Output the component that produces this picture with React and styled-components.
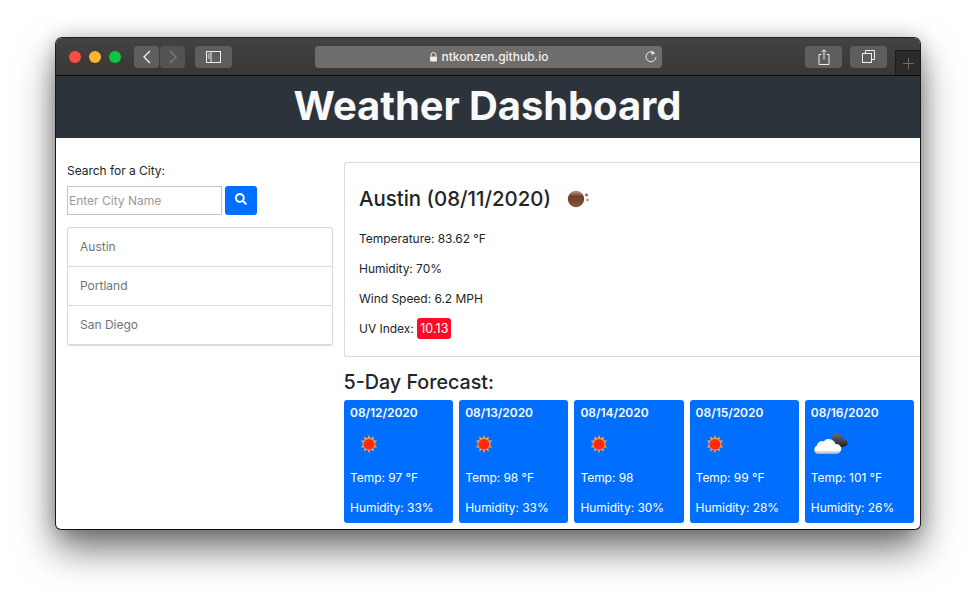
import React from "react";
import styled, { createGlobalStyle } from "styled-components";
import { FaSearch } from "react-icons/fa";

const Global = createGlobalStyle`
  html, body { margin: 0; padding: 0; background: #fff; }
  body { font-family: Inter, "Liberation Sans", sans-serif; }
  * { box-sizing: border-box; }
`;

const Stage = styled.div`
  width: 976px;
  height: 603px;
  padding: 38px 56px 74px;
  overflow: hidden;
  background: #fff;
`;

const Window = styled.div`
  width: 864px;
  height: 491px;
  display: flex;
  flex-direction: column;
  border-radius: 6px 6px 5px 5px;
  overflow: hidden;
  background: #fff;
  box-shadow: 0 0 0 1px rgba(0, 0, 0, 0.85), 0 20px 38px rgba(0, 0, 0, 0.55), 0 2px 20px rgba(0, 0, 0, 0.25);
`;

const TitleBar = styled.div`
  position: relative;
  flex: 0 0 38px;
  display: flex;
  align-items: center;
  padding: 0 0 0 13px;
  background: linear-gradient(#454341, #393735);
  border-bottom: 1px solid #0d0d0d;
`;

const Lights = styled.div`
  display: flex;
  gap: 8px;
  margin-right: 13px;
`;

const Light = styled.span`
  width: 12px;
  height: 12px;
  border-radius: 50%;
  background: ${(p) => p.$color};
`;

const NavGroup = styled.div`
  display: flex;
  gap: 1px;
  margin-right: 10px;
`;

const ToolButton = styled.div`
  width: ${(p) => p.$width}px;
  height: 22px;
  display: flex;
  align-items: center;
  justify-content: center;
  border-radius: 4px;
  background: ${(p) => (p.$dim ? "#555351" : "#605e5c")};
`;

const AddressBar = styled.div`
  position: relative;
  width: 347px;
  height: 22px;
  margin-left: 83px;
  display: flex;
  align-items: center;
  justify-content: center;
  gap: 4px;
  border-radius: 4px;
  background: #6f6d6b;
  color: #f1f1f1;
  font-size: 12px;
  font-weight: 500;
`;

const Reload = styled.span`
  position: absolute;
  right: 4px;
  top: 4px;
  display: flex;
`;

const RightTools = styled.div`
  display: flex;
  gap: 8px;
  margin-left: 143px;
`;

const NewTab = styled.div`
  position: absolute;
  right: 0;
  bottom: 0;
  width: 25px;
  height: 25px;
  display: flex;
  align-items: center;
  justify-content: center;
  background: #2d2b29;
  border-left: 1px solid #1a1a1a;
  border-top: 1px solid #1a1a1a;
`;

const Header = styled.header`
  flex: 0 0 62px;
  display: flex;
  align-items: center;
  justify-content: center;
  padding: 0 1px 2px 0;
  background: #2d333b;
  color: #f8f9fa;
`;

const Title = styled.h1`
  margin: 0;
  font-size: 40px;
  line-height: 60px;
  font-weight: 700;
  letter-spacing: -0.1px;
`;

const Main = styled.main`
  flex: 1;
  display: flex;
  min-height: 0;
  overflow: hidden;
`;

const Sidebar = styled.aside`
  flex: 0 0 288px;
  padding: 25px 11px 0 11px;
`;

const SearchLabel = styled.label`
  display: block;
  font-size: 12px;
  line-height: 16px;
  letter-spacing: -0.03px;
  color: #212529;
  margin-bottom: 7px;
`;

const SearchRow = styled.div`
  display: flex;
  gap: 3px;
  height: 29px;
  margin-bottom: 12px;
  align-items: flex-start;
`;

const CityInput = styled.input`
  width: 155px;
  height: 29px;
  padding: 0 1px;
  border: 1px solid #c4c4c4;
  border-radius: 0;
  font: 12px Inter, "Liberation Sans", sans-serif;
  outline: none;
  &::placeholder { color: #9a9a9a; opacity: 1; }
`;

const SearchButton = styled.button`
  width: 32px;
  height: 29px;
  border: 0;
  padding: 0 0 3px;
  display: flex;
  align-items: center;
  justify-content: center;
  border-radius: 3px;
  background: #006eff;
  color: #fff;
  font-size: 12px;
`;

const CityList = styled.ul`
  margin: 0;
  padding: 0;
  list-style: none;
  width: 266px;
  border: 1px solid #d8dce0;
  border-bottom-width: 2px;
  border-radius: 3px;
`;

const CityItem = styled.li`
  height: 39px;
  padding: 0 12px 1px;
  display: flex;
  align-items: center;
  font-size: 12px;
  color: #6c757d;
  &:first-child { height: 38px; }
  & + & { border-top: 1px solid #d8dce0; }
`;

const Content = styled.section`
  flex: 1;
  min-width: 0;
  padding-top: 24px;
`;

const TodayCard = styled.div`
  height: 195px;
  padding: 15px 14px;
  border: 1px solid #d8dce0;
  border-right: 0;
  border-radius: 3px 0 0 3px;
  color: #212529;
`;

const CityHeading = styled.h2`
  margin: 0 0 4px;
  display: flex;
  align-items: center;
  height: 41px;
  font-size: 20.4px;
  font-weight: 500;
  gap: 16px;
`;

const Stat = styled.p`
  margin: 0;
  height: 30px;
  display: flex;
  align-items: center;
  font-size: 12px;
  letter-spacing: -0.03px;
`;

const UvBadge = styled.span`
  display: inline-flex;
  align-items: center;
  height: 21px;
  padding: 0 3px 0 3.500px;
  margin-left: 3px;
  border-radius: 3px;
  background: #ff0a29;
  color: #fff;
  font-size: 12.4px;
  letter-spacing: 0.1px;
`;

const ForecastHeading = styled.h3`
  margin: 13px 0 6px -0.500px;
  height: 24px;
  line-height: 24px;
  font-size: 19.700px;
  font-weight: 500;
  color: #212529;
`;

const ForecastRow = styled.div`
  display: flex;
  gap: 6px;
  width: 570px;
`;

const DayCard = styled.div`
  flex: 1;
  height: 123px;
  padding: 4px 6px 0;
  border-radius: 3px;
  background: #006eff;
  color: #fff;
  font-size: 12px;
  letter-spacing: -0.04px;
`;

const DayDate = styled.div`
  height: 17px;
  line-height: 17px;
  font-weight: 600;
`;

const IconSlot = styled.div`
  height: 32px;
  margin-top: 7px;
  margin-bottom: 2px;
  display: flex;
  align-items: center;
  padding-left: ${(p) => p.$indent}px;
`;

const DayLine = styled.div`
  height: 30px;
  display: flex;
  align-items: center;
`;

const Sun = () => (
  <svg width="20" height="20" viewBox="0 0 20 20">
    <defs>
      <radialGradient id="sunCore" cx="50%" cy="55%" r="55%">
        <stop offset="0%" stopColor="#ff2a18" />
        <stop offset="76%" stopColor="#fb2a0c" />
        <stop offset="100%" stopColor="#ffb016" />
      </radialGradient>
    </defs>
    <path
      d="M10 .8l1.500 3.600 3.400-1.800-.6 3.800 4 .1-2.800 2.900 3.200 .6-3.200 .6 2.800 2.900-4 .1.6 3.800-3.400-1.800L10 19.200l-1.500-3.600-3.400 1.800.6-3.800-4-.1 2.800-2.900L1.300 10l3.200-.6-2.800-2.900 4-.1-.6-3.800 3.400 1.800z"
      fill="#f2a258"
    />
    <circle cx="10" cy="10" r="5.800" fill="url(#sunCore)" />
  </svg>
);

const Moon = () => (
  <svg width="24" height="20" viewBox="0 0 24 20">
    <defs>
      <linearGradient id="moonBody" x1="0" y1="0" x2="0" y2="1">
        <stop offset="0%" stopColor="#c09c84" />
        <stop offset="35%" stopColor="#6d4027" />
        <stop offset="100%" stopColor="#84563a" />
      </linearGradient>
    </defs>
    <circle cx="9" cy="10" r="8.200" fill="url(#moonBody)" />
    <circle cx="19.500" cy="6" r="1.400" fill="#8a5a44" />
    <circle cx="20.500" cy="11" r="1.200" fill="#a98877" />
  </svg>
);

const Cloud = () => (
  <svg width="36" height="22" viewBox="0 0 36 22">
    <defs>
      <linearGradient id="darkCloud" x1="0" y1="0" x2="0" y2="1">
        <stop offset="0%" stopColor="#6a6e76" />
        <stop offset="100%" stopColor="#222" />
      </linearGradient>
      <linearGradient id="lightCloud" x1="0" y1="0" x2="0" y2="1">
        <stop offset="0%" stopColor="#fff" />
        <stop offset="74%" stopColor="#fff" />
        <stop offset="100%" stopColor="#a8a8a8" />
      </linearGradient>
    </defs>
    <path
      d="M18 5a4.800 4.800 0 0 1 9-2.500 5 5 0 0 1 3.500 4.500 3.200 3.200 0 0 1 1.500 6c-2 1-4.500 1-7 1-4 0-6-5-7-9z"
      fill="url(#darkCloud)"
    />
    <path
      d="M4.500 21a4.400 4.400 0 0 1-1.600-8.400A5 5 0 0 1 9.500 8.400 7 7 0 0 1 21.500 11a5 5 0 0 1 3.600 9c-1 .8-2 1-3.600 1z"
      fill="url(#lightCloud)"
    />
  </svg>
);

const ICONS = { sun: <Sun />, cloud: <Cloud /> };

const FORECAST = [
  { date: "08/12/2020", temp: "Temp: 97 °F", hum: "Humidity: 33%", icon: "sun" },
  { date: "08/13/2020", temp: "Temp: 98 °F", hum: "Humidity: 33%", icon: "sun" },
  { date: "08/14/2020", temp: "Temp: 98", hum: "Humidity: 30%", icon: "sun" },
  { date: "08/15/2020", temp: "Temp: 99 °F", hum: "Humidity: 28%", icon: "sun" },
  { date: "08/16/2020", temp: "Temp: 101 °F", hum: "Humidity: 26%", icon: "cloud" },
];

export default function App() {
  return (
    <Stage>
      <Global />
      <Window>
        <TitleBar>
          <Lights>
            <Light $color="#fc4c48" />
            <Light $color="#fdb42e" />
            <Light $color="#0bc63f" />
          </Lights>
          <NavGroup>
            <ToolButton $width={25}>
              <svg width="10" height="14" viewBox="0 0 10 14" fill="none" stroke="#f0f0f0" strokeWidth="1.400">
                <path d="M8 1 2 7l6 6" />
              </svg>
            </ToolButton>
            <ToolButton $width={25} $dim>
              <svg width="10" height="14" viewBox="0 0 10 14" fill="none" stroke="#7d7b79" strokeWidth="1.400">
                <path d="m2 1 6 6-6 6" />
              </svg>
            </ToolButton>
          </NavGroup>
          <ToolButton $width={37}>
            <svg width="15" height="12" viewBox="0 0 15 12" fill="none" stroke="#eee" strokeWidth="1">
              <rect x=".5" y=".5" width="14" height="11" />
              <path d="M5 .5v11M1.800 3h2M1.800 5h2M1.800 7h2" />
            </svg>
          </ToolButton>
          <AddressBar>
            <svg width="9" height="10" viewBox="0 0 9 10">
              <path d="M2 4.500V3a2.500 2.500 0 0 1 5 0v1.500" fill="none" stroke="#eee" strokeWidth="1" />
              <rect x="1" y="4.500" width="7" height="5" rx="1" fill="#eee" />
            </svg>
            ntkonzen.github.io
            <Reload>
              <svg width="14" height="14" viewBox="0 0 14 14" fill="none" stroke="#e8e8e8" strokeWidth="1">
                <path d="M10.900 3.600A5 5 0 1 0 12 7" />
                <path d="M7.400 .6 10.600 3 7.600 5.200" fill="#e8e8e8" stroke="none" />
              </svg>
            </Reload>
          </AddressBar>
          <RightTools>
            <ToolButton $width={37}>
              <svg width="12" height="16" viewBox="0 0 12 16" fill="none" stroke="#eee" strokeWidth="1">
                <path d="M3.500 5.500H1v10h10v-10H8.500M6 10.500V.8M3.600 3 6 .8 8.400 3" />
              </svg>
            </ToolButton>
            <ToolButton $width={37}>
              <svg width="13" height="13" viewBox="0 0 13 13" fill="none" stroke="#eee" strokeWidth="1">
                <rect x=".5" y="3.500" width="9" height="9" />
                <path d="M3.500 3.500v-3h9v9h-3" />
              </svg>
            </ToolButton>
          </RightTools>
          <NewTab>
            <svg width="11" height="11" viewBox="0 0 11 11" stroke="#6f6d6b" strokeWidth="1">
              <path d="M5.500 0v11M0 5.500h11" />
            </svg>
          </NewTab>
        </TitleBar>
        <Header>
          <Title>Weather Dashboard</Title>
        </Header>
        <Main>
          <Sidebar>
            <SearchLabel>Search for a City:</SearchLabel>
            <SearchRow>
              <CityInput placeholder="Enter City Name" />
              <SearchButton aria-label="Search">
                <FaSearch />
              </SearchButton>
            </SearchRow>
            <CityList>
              <CityItem>Austin</CityItem>
              <CityItem>Portland</CityItem>
              <CityItem>San Diego</CityItem>
            </CityList>
          </Sidebar>
          <Content>
            <TodayCard>
              <CityHeading>
                Austin (08/11/2020)
                <Moon />
              </CityHeading>
              <Stat>Temperature: 83.62 °F</Stat>
              <Stat>Humidity: 70%</Stat>
              <Stat>Wind Speed: 6.2 MPH</Stat>
              <Stat>
                UV Index:<UvBadge>10.13</UvBadge>
              </Stat>
            </TodayCard>
            <ForecastHeading>5-Day Forecast:</ForecastHeading>
            <ForecastRow>
              {FORECAST.map((d) => (
                <DayCard key={d.date}>
                  <DayDate>{d.date}</DayDate>
                  <IconSlot $indent={d.icon === "sun" ? 9 : 3}>{ICONS[d.icon]}</IconSlot>
                  <DayLine>{d.temp}</DayLine>
                  <DayLine>{d.hum}</DayLine>
                </DayCard>
              ))}
            </ForecastRow>
          </Content>
        </Main>
      </Window>
    </Stage>
  );
}
